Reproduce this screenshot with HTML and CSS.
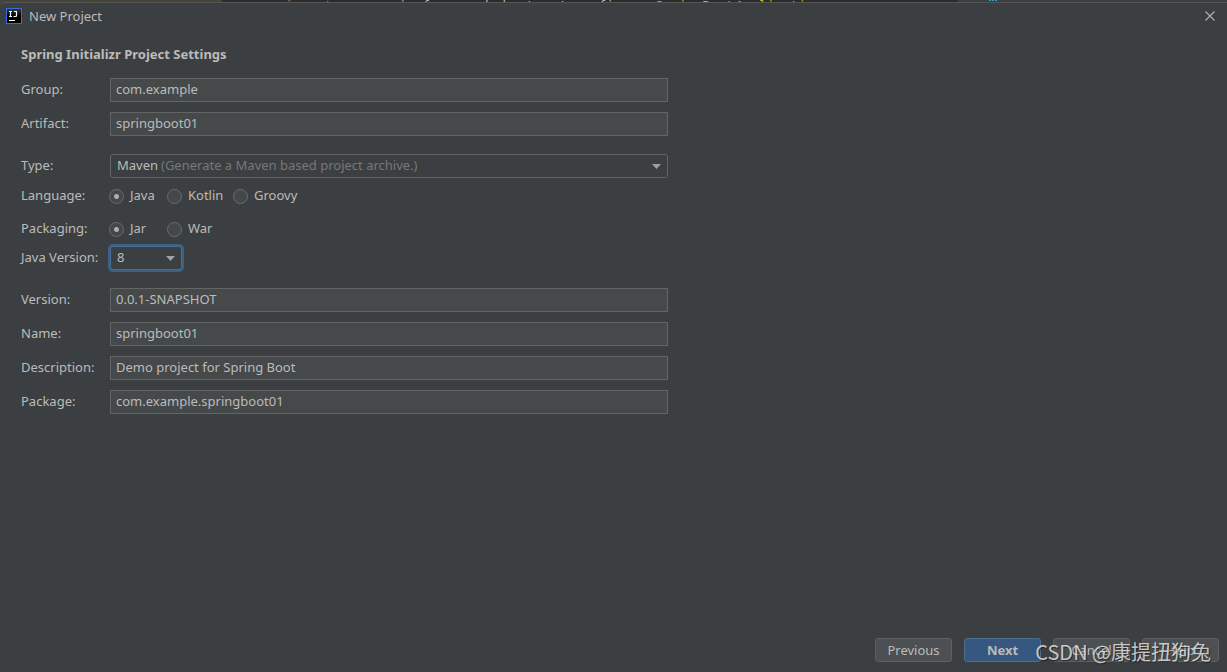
FILE: index.html
```html
<!DOCTYPE html>
<html lang="en">
<head>
<meta charset="utf-8">
<title>New Project</title>
<link rel="stylesheet" href="styles.css">
</head>
<body>
<div class="editor" aria-hidden="true">
  <div class="editor-tree"></div>
  <div class="editor-code"><span class="kw">import</span><span>org.springframework.</span><span>boot.</span><span>autoconfigure.</span><span class="cls">SpringBoot</span><span class="cls">Application</span></div>
  <div class="editor-side"><i></i><i></i><i></i></div>
</div>
<main class="dialog">
  <header class="titlebar">
    <svg class="logo" width="16" height="16" viewBox="0 0 16 16" aria-hidden="true">
      <defs><linearGradient id="shade" x1="0" y1="0" x2="0" y2="1"><stop offset="0" stop-color="#3a3a3a"/><stop offset=".5" stop-color="#000"/></linearGradient></defs>
      <rect x=".5" y=".5" width="15" height="15" fill="url(#shade)" stroke="#2f6de0"/>
      <path d="M3 3.500h3M4.500 3.500v5M3 8.500h3M8 3.500h3M10.500 3.500v4q0 1-1 1H7.500" fill="none" stroke="#fff" stroke-width="1.2"/>
      <path d="M3 12.500h6" stroke="#fff"/>
    </svg>
    <span class="title">New Project</span>
    <button class="close" type="button" aria-label="Close">
      <svg width="10" height="10" viewBox="0 0 10 10"><path d="M.5.5l9 9M9.500.5l-9 9" stroke="#afb1b3" stroke-width="1.1"/></svg>
    </button>
  </header>
  <form class="form">
    <h1>Spring Initializr Project Settings</h1>
    <div class="row"><label for="group">Group:</label><input class="field" id="group" type="text" value="com.example"></div>
    <div class="row"><label for="artifact">Artifact:</label><input class="field" id="artifact" type="text" value="springboot01"></div>
    <div class="row section">
      <label for="type">Type:</label>
      <div class="combo">
        <select id="type"><option>Maven</option><option>Gradle</option></select>
        <span class="hint">(Generate a Maven based project archive.)</span>
        <svg class="arrow" width="9" height="5" viewBox="0 0 9 5"><path d="M0 0h9L4.500 5z" fill="#9da0a4"/></svg>
      </div>
    </div>
    <div class="row radios" role="radiogroup" aria-labelledby="lang">
      <span id="lang">Language:</span>
      <div class="options">
        <label><input type="radio" name="language" checked><span>Java</span></label>
        <label><input type="radio" name="language"><span>Kotlin</span></label>
        <label><input type="radio" name="language"><span>Groovy</span></label>
      </div>
    </div>
    <div class="row packaging" role="radiogroup" aria-labelledby="pack">
      <span id="pack">Packaging:</span>
      <div class="options">
        <label><input type="radio" name="packaging" checked><span>Jar</span></label>
        <label><input type="radio" name="packaging"><span>War</span></label>
      </div>
    </div>
    <div class="row java">
      <label for="java">Java Version:</label>
      <div class="combo small">
        <select id="java"><option>8</option><option>11</option></select>
        <svg class="arrow" width="9" height="5" viewBox="0 0 9 5"><path d="M0 0h9L4.500 5z" fill="#9da0a4"/></svg>
      </div>
    </div>
    <div class="row section"><label for="version">Version:</label><input class="field" id="version" type="text" value="0.0.1-SNAPSHOT"></div>
    <div class="row"><label for="name">Name:</label><input class="field" id="name" type="text" value="springboot01"></div>
    <div class="row"><label for="desc">Description:</label><input class="field" id="desc" type="text" value="Demo project for Spring Boot"></div>
    <div class="row"><label for="package">Package:</label><input class="field" id="package" type="text" value="com.example.springboot01"></div>
  </form>
  <footer class="actions">
    <button type="button">Previous</button>
    <button type="button" class="primary">Next</button>
    <button type="button">Cancel</button>
    <button type="button">Help</button>
    <span class="watermark">CSDN @康提扭狗兔</span>
  </footer>
</main>
</body>
</html>
```
FILE: styles.css
```css
* { box-sizing: border-box; }
body {
  margin: 0;
  min-height: 100vh;
  display: flex;
  flex-direction: column;
  background: #3c3f41;
  color: #bbbbbb;
  font: 13px/18px "Noto Sans", "Open Sans", sans-serif;
}
input, select, button { font: inherit; color: inherit; margin: 0; }

.editor { display: flex; height: 2px; overflow: hidden; background: #2b2b2b; }
.editor-tree { flex: none; width: 222px; background: #45443a; }
.editor-code {
  flex: 1;
  display: flex;
  padding-left: 63px;
  color: #a9b7c6;
  font: 13px/12px "DejaVu Sans Mono", monospace;
  white-space: nowrap;
}
.editor-code span { flex: none; margin-right: 2px; }
.editor-code .kw { color: #cc7832; margin-right: 12px; }
.editor-code .cls { color: #bbb529; }
.editor-side { flex: none; width: 269px; padding-left: 31px; display: flex; gap: 1px; background: #3c3f41; }
.editor-side i { width: 2px; height: 1px; background: #2aa5c0; }

.dialog {
  flex: 1;
  display: flex;
  flex-direction: column;
  border-top: 1px solid #555555;
  border-top-left-radius: 5px;
}
.titlebar { display: flex; align-items: center; height: 26px; padding: 0 12px 0 6px; }
.title { margin-left: 7px; }
.close { margin-left: auto; display: flex; padding: 0; border: 0; background: none; }

.form { flex: 1; padding: 16px 21px 0; }
h1 { margin: 0 0 15px; font-size: 13px; line-height: 18px; font-weight: 700; }
.row {
  display: grid;
  grid-template-columns: 89px minmax(0, 558px);
  align-items: center;
  margin-bottom: 10px;
}
.row > label, .row > span, .options span, .hint { padding-bottom: 2px; }
.section { margin-top: 18px; }
.field {
  width: 100%;
  height: 24px;
  padding: 0 5px 2px;
  border: 1px solid #646464;
  border-radius: 0;
  background: #45494a;
  outline: 0;
}
.combo { display: grid; align-items: center; height: 24px; }
.combo > * { grid-area: 1 / 1; }
.combo select {
  appearance: none;
  width: 100%;
  height: 24px;
  padding: 0 6px 2px;
  border: 1px solid #646464;
  border-radius: 3px;
  background: #3c3f41;
  outline: 0;
}
.hint { padding-left: 51px; color: #777777; pointer-events: none; }
.arrow { justify-self: end; margin-right: 7px; pointer-events: none; }
.small { width: 72px; }
.small select { border-color: #466d94; box-shadow: 0 0 0 2px #3d6185; }

.radios { margin: -2px 0 13px; }
.packaging { margin-bottom: 7px; }
.options { display: flex; }
.options label { display: flex; align-items: center; gap: 6px; min-width: 58px; margin-right: 8px; }
.options label:first-child { margin-right: 0; }
.options input {
  appearance: none;
  width: 15px;
  height: 15px;
  margin-left: -1px;
  border: 1px solid #6b6b6b;
  border-radius: 50%;
  background: #43494a;
}
.options input:checked { background: radial-gradient(circle, #adadad 2px, #43494a 3px); }

.actions {
  position: relative;
  display: flex;
  justify-content: flex-end;
  gap: 12px;
  padding: 0 8px 10px;
}
.actions button {
  width: 77px;
  height: 24px;
  padding: 0;
  border: 1px solid #5e6060;
  border-radius: 3px;
  background: #4c5052;
}
.actions .primary { border-color: #4c708c; background: #365880; font-weight: 700; }
.watermark {
  position: absolute;
  right: 16px;
  bottom: 6px;
  color: rgba(225, 225, 225, 0.85);
  font: 20px/28px "Noto Sans CJK SC", sans-serif;
  text-shadow: 1px 1px 1px rgba(0, 0, 0, 0.5);
  white-space: nowrap;
  pointer-events: none;
}
```
